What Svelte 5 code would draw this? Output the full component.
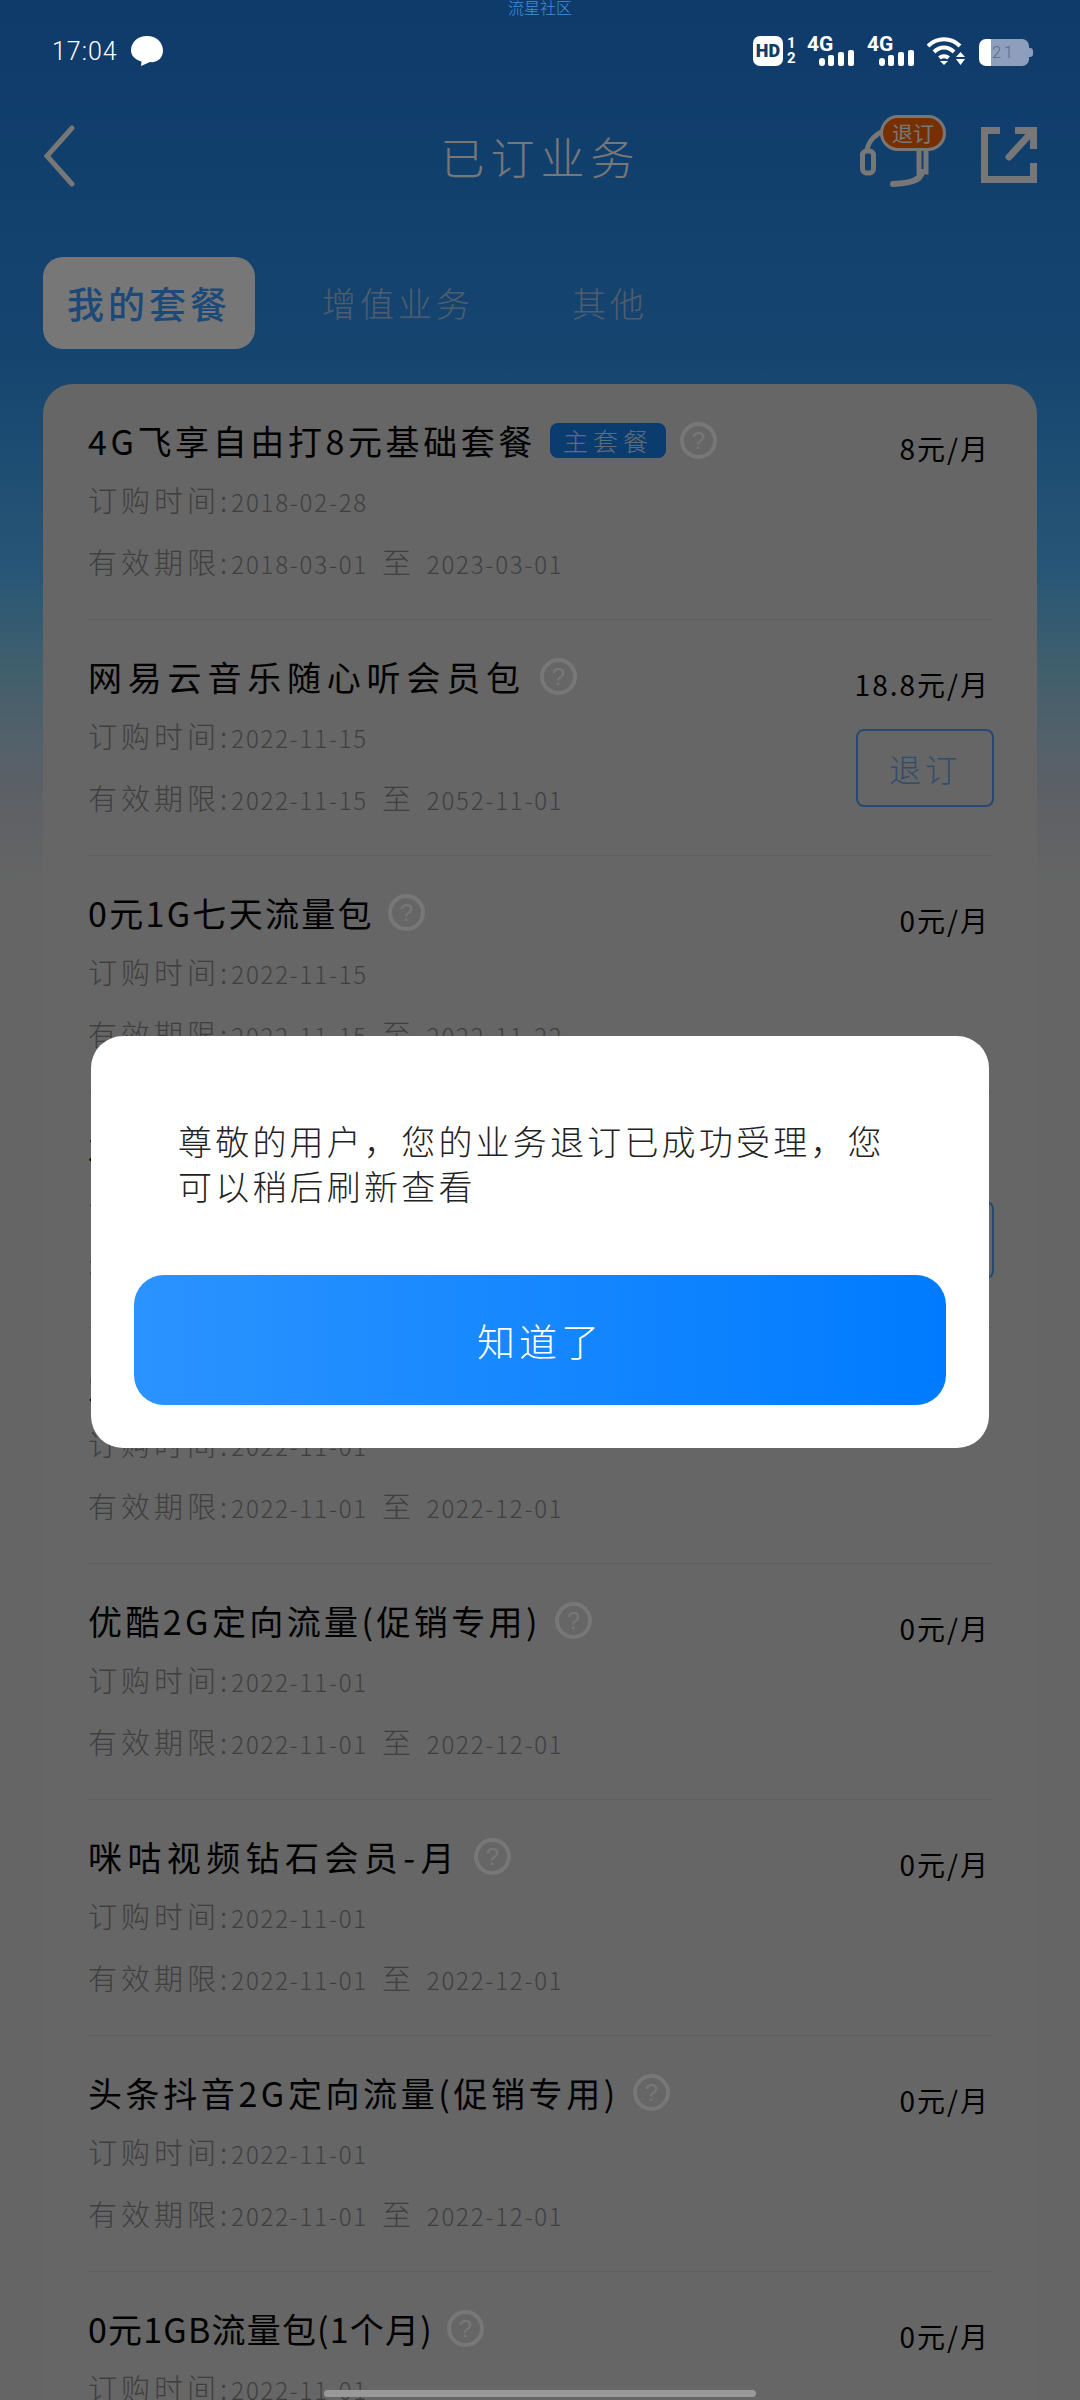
<script>
  const rows = [
    { title: '4G飞享自由打8元基础套餐', ls: 3.6, main: true, price: '8元/月', buy: '2018-02-28', from: '2018-03-01', to: '2023-03-01' },
    { title: '网易云音乐随心听会员包', ls: 5.8, price: '18.8元/月', buy: '2022-11-15', from: '2022-11-15', to: '2052-11-01', cancel: true },
    { title: '0元1G七天流量包', ls: 2.3, price: '0元/月', buy: '2022-11-15', from: '2022-11-15', to: '2022-11-22' },
    { title: '3元1G定向流量包', ls: 5, price: '3元/月', buy: '2022-11-01', from: '2022-11-01', to: '2022-12-01', cancel: true },
    { title: '爱奇艺2G定向流量', ls: 5, price: '0元/月', buy: '2022-11-01', from: '2022-11-01', to: '2022-12-01' },
    { title: '优酷2G定向流量(促销专用)', ls: 3.4, price: '0元/月', buy: '2022-11-01', from: '2022-11-01', to: '2022-12-01' },
    { title: '咪咕视频钻石会员-月', ls: 5.4, price: '0元/月', buy: '2022-11-01', from: '2022-11-01', to: '2022-12-01' },
    { title: '头条抖音2G定向流量(促销专用)', ls: 3.6, price: '0元/月', buy: '2022-11-01', from: '2022-11-01', to: '2022-12-01' },
    { title: '0元1GB流量包(1个月)', ls: 1.2, price: '0元/月', buy: '2022-11-01', from: '2022-11-01', to: '2022-12-01' }
  ]
</script>

<div class="page">
  <div class="watermark">流星社区</div>

  <div class="status">
    <div class="status-left">
      <span class="time">17:04</span>
      <svg width="32" height="30" viewBox="0 0 32 30">
        <path d="M16 0C25 0 32 6 32 14.500C32 22 26 27 19 26L10 30L10.500 25.500C4 23.500 0 19.500 0 14.500C0 6 7 0 16 0Z" fill="#fff" />
      </svg>
    </div>
    <div class="status-right">
      <div class="hd">HD</div>
      <div class="sim"><span>1</span><span>2</span></div>
      {#each [0, 1] as s}
        <svg class="signal" width="48" height="30" viewBox="0 0 48 30">
          <text x="0" y="15" font-size="21" font-weight="700" fill="#fff" font-family="Roboto, sans-serif">4G</text>
          <rect x="12" y="22" width="6" height="8" rx="3" fill="#fff" />
          <rect x="21" y="19" width="6" height="11" rx="2" fill="#fff" />
          <rect x="31" y="16" width="6" height="14" rx="2" fill="#fff" />
          <rect x="41" y="14" width="6" height="16" rx="2" fill="#fff" />
        </svg>
      {/each}
      <svg class="wifi" width="38" height="28" viewBox="0 0 38 28" fill="none" stroke="#fff" stroke-width="4">
        <path d="M1 9C10 0 24 0 33 9" />
        <path d="M7 15C13 9 21 9 27 15" />
        <path d="M12.500 21C15 18.500 19 18.500 21.500 21" />
        <path d="M13 24L17 28L21 24Z" fill="#fff" stroke="none" />
        <path d="M29 20L33.500 15L38 20Z M29 22H38L33.500 28Z" fill="#fff" stroke="none" />
      </svg>
      <div class="battery">21</div>
    </div>
  </div>

  <div class="header">
    <svg class="back" width="32" height="62" viewBox="0 0 32 62" fill="none" stroke="#fff" stroke-width="5" stroke-linecap="round">
      <path d="M29 3L4 31L29 59" />
    </svg>
    <div class="title">已订业务</div>
    <div class="actions">
      <div class="service">
        <svg width="70" height="72" viewBox="0 0 70 72" fill="none" stroke="#fff" stroke-width="5" stroke-linecap="round">
          <rect x="2.500" y="36" width="11" height="22" rx="4" />
          <path d="M7 35C9 25 15 20 25 15" />
          <path d="M59 36V57H66V36" />
          <path d="M62 57C60 66 50 68 33 69" stroke-width="6" />
        </svg>
        <span class="badge">退订</span>
      </div>
      <svg width="56" height="56" viewBox="0 0 56 56" fill="none" stroke="#fff" stroke-width="7">
        <path d="M19 3.500H3.500V52.500H52.500V36" />
        <path d="M28 30L51 5" stroke-linecap="round" />
        <path d="M34 3.500H52.500V22" />
      </svg>
    </div>
  </div>

  <div class="tabs">
    <div class="tab active">我的套餐</div>
    <div class="tab">增值业务</div>
    <div class="tab last">其他</div>
  </div>

  <div class="card">
    {#each rows as row}
      <div class="row">
        <div class="info">
          <div class="name">
            <span class="name-text" style="letter-spacing: {row.ls}px">{row.title}</span>
            {#if row.main}<span class="tag">主套餐</span>{/if}
            <span class="help">?</span>
          </div>
          <div class="line"><span class="lbl">订购时间:</span>{row.buy}</div>
          <div class="line"><span class="lbl">有效期限:</span>{row.from}<span class="to">至</span>{row.to}</div>
        </div>
        <div class="side">
          <div class="price">{row.price}</div>
          {#if row.cancel}<div class="cancel">退订</div>{/if}
        </div>
      </div>
    {/each}
  </div>

  <div class="overlay">
    <div class="modal">
      <p>尊敬的用户&#65292;您的业务退订已成功受理&#65292;您可以稍后刷新查看</p>
      <div class="ok">知道了</div>
    </div>
  </div>

  <div class="home"></div>
</div>

<style>
  :global(body) {
    margin: 0;
  }

  .page {
    position: relative;
    width: 1080px;
    height: 2400px;
    overflow: hidden;
    box-sizing: border-box;
    padding: 0 43px;
    font-family: "Noto Sans CJK SC", "Noto Sans", sans-serif;
    font-weight: 300;
    background: linear-gradient(#207ee4 0, #2d94ee 350px, #56b8ff 573px, #87cbe8 662px, #b8cfe4 752px, #c8ced8 796px, #d9d9d9 885px);
  }

  .watermark {
    position: absolute;
    top: -4px;
    left: 0;
    right: 0;
    z-index: 7;
    text-align: center;
    font-size: 16px;
    line-height: 22px;
    color: #3f8fe0;
  }

  .status {
    position: relative;
    z-index: 6;
    display: flex;
    justify-content: space-between;
    height: 100px;
    margin: 0 5px 0 9px;
    padding-top: 36px;
    box-sizing: border-box;
    color: #fff;
  }

  .status-left {
    display: flex;
    align-items: flex-start;
    gap: 13px;
  }

  .time {
    font-size: 25px;
    line-height: 30px;
    letter-spacing: 1px;
    font-family: Roboto, sans-serif;
    font-weight: 300;
    margin-top: 1px;
  }

  .status-right {
    display: flex;
    align-items: flex-start;
    height: 30px;
    margin-right: 3px;
    font-family: Roboto, sans-serif;
  }

  .hd {
    width: 30px;
    height: 30px;
    border-radius: 7px;
    background: #fff;
    color: #0f3b6b;
    font-size: 18px;
    font-weight: 900;
    line-height: 30px;
    text-align: center;
  }

  .sim {
    display: flex;
    flex-direction: column;
    width: 24px;
    padding-left: 4px;
    box-sizing: border-box;
    font-size: 15px;
    font-weight: 700;
    line-height: 15px;
  }

  .signal {
    margin-right: 12px;
  }

  .wifi {
    margin: 1px 14px 0 0;
  }

  .battery {
    position: relative;
    width: 50px;
    height: 27px;
    margin-top: 3px;
    border-radius: 7px;
    background: linear-gradient(90deg, #fff 12px, #8d9fbd 12px);
    color: #5a6a80;
    font-size: 16px;
    line-height: 27px;
    text-align: center;
    letter-spacing: 3px;
  }

  .battery::after {
    content: '';
    position: absolute;
    top: 9px;
    right: -4px;
    width: 4px;
    height: 9px;
    border-radius: 0 3px 3px 0;
    background: #8d9fbd;
  }

  .header {
    display: flex;
    align-items: center;
    justify-content: space-between;
    height: 112px;
  }

  .title {
    font-size: 44px;
    letter-spacing: 6px;
    color: #fff;
    line-height: 60px;
    margin-left: 146px;
  }

  .actions {
    display: flex;
    align-items: flex-end;
    gap: 35px;
    margin-bottom: 14px;
  }

  .service {
    position: relative;
    width: 86px;
    height: 72px;
    margin-bottom: -4px;
  }

  .badge {
    position: absolute;
    top: 0;
    right: 0;
    width: 66px;
    height: 36px;
    box-sizing: border-box;
    border: 3px solid #fff;
    border-radius: 18px;
    background: #ff6400;
    color: #fff;
    font-size: 21px;
    font-weight: 400;
    line-height: 29px;
    text-align: center;
  }

  .tabs {
    display: flex;
    align-items: center;
    margin-top: 45px;
  }

  .tab {
    font-size: 34px;
    letter-spacing: 4px;
    color: #a8c8ec;
    line-height: 92px;
    margin-left: 67px;
  }

  .tab.last {
    margin-left: 98px;
  }

  .tab.active {
    width: 212px;
    height: 92px;
    margin-left: 0;
    border-radius: 20px;
    background: #fff;
    color: #3c9dff;
    font-size: 37px;
    font-weight: 500;
    text-align: center;
  }

  .card {
    margin-top: 35px;
    border-radius: 30px 30px 0 0;
    background: #dadada;
    padding: 0 45px;
  }

  .row {
    display: flex;
    justify-content: space-between;
    height: 236px;
    box-sizing: border-box;
    padding-top: 28px;
    border-bottom: 1px solid #c9c9c9;
  }

  .name {
    display: flex;
    align-items: center;
    height: 56px;
  }

  .name-text {
    color: #000;
    font-size: 34px;
    font-weight: 400;
    white-space: nowrap;
  }

  .tag {
    width: 116px;
    height: 35px;
    margin-left: 14px;
    border-radius: 8px;
    background: #1780f0;
    color: #cfe4ff;
    font-size: 25px;
    letter-spacing: 5px;
    line-height: 35px;
    text-align: center;
  }

  .help {
    width: 37px;
    height: 37px;
    margin-left: 14px;
    box-sizing: border-box;
    border: 4px solid #ffffff;
    border-radius: 50%;
    color: #fff;
    font-size: 24px;
    font-family: "Liberation Sans", sans-serif;
    line-height: 29px;
    text-align: center;
  }

  .line {
    height: 62px;
    line-height: 62px;
    font-size: 24px;
    letter-spacing: 1.800px;
    color: #888;
    white-space: nowrap;
  }

  .lbl {
    font-size: 29px;
    letter-spacing: 4px;
  }

  .to {
    font-size: 29px;
    margin: 0 14px;
  }

  .side {
    display: flex;
    flex-direction: column;
    align-items: flex-end;
    padding-top: 16px;
  }

  .price {
    height: 40px;
    margin-right: 2px;
    color: #000;
    font-size: 28px;
    font-weight: 400;
    letter-spacing: 2px;
    line-height: 40px;
  }

  .cancel {
    width: 138px;
    height: 78px;
    margin: 25px -2px 0 0;
    box-sizing: border-box;
    border: 2px solid #4f9cf0;
    border-radius: 8px;
    color: #6aa5e8;
    font-size: 32px;
    letter-spacing: 4px;
    line-height: 74px;
    text-align: center;
  }

  .overlay {
    position: absolute;
    inset: 0;
    z-index: 5;
    background: rgba(0, 0, 0, 0.533);
  }

  .modal {
    width: 898px;
    height: 412px;
    margin: 1036px auto 0;
    box-sizing: border-box;
    padding: 82px 43px 0;
    border-radius: 32px;
    background: #fff;
  }

  .modal p {
    margin: 0;
    padding: 0 44px;
    height: 90px;
    font-size: 34px;
    letter-spacing: 3.200px;
    line-height: 45px;
    color: #222;
  }

  .ok {
    height: 130px;
    margin-top: 67px;
    border-radius: 30px;
    background: linear-gradient(90deg, #2b93ff, #007bff);
    color: #fff;
    font-size: 38px;
    letter-spacing: 4px;
    line-height: 130px;
    text-align: center;
  }

  .home {
    position: absolute;
    left: 324px;
    bottom: 3px;
    z-index: 6;
    width: 432px;
    height: 7px;
    border-radius: 4px;
    background: #999;
  }
</style>
